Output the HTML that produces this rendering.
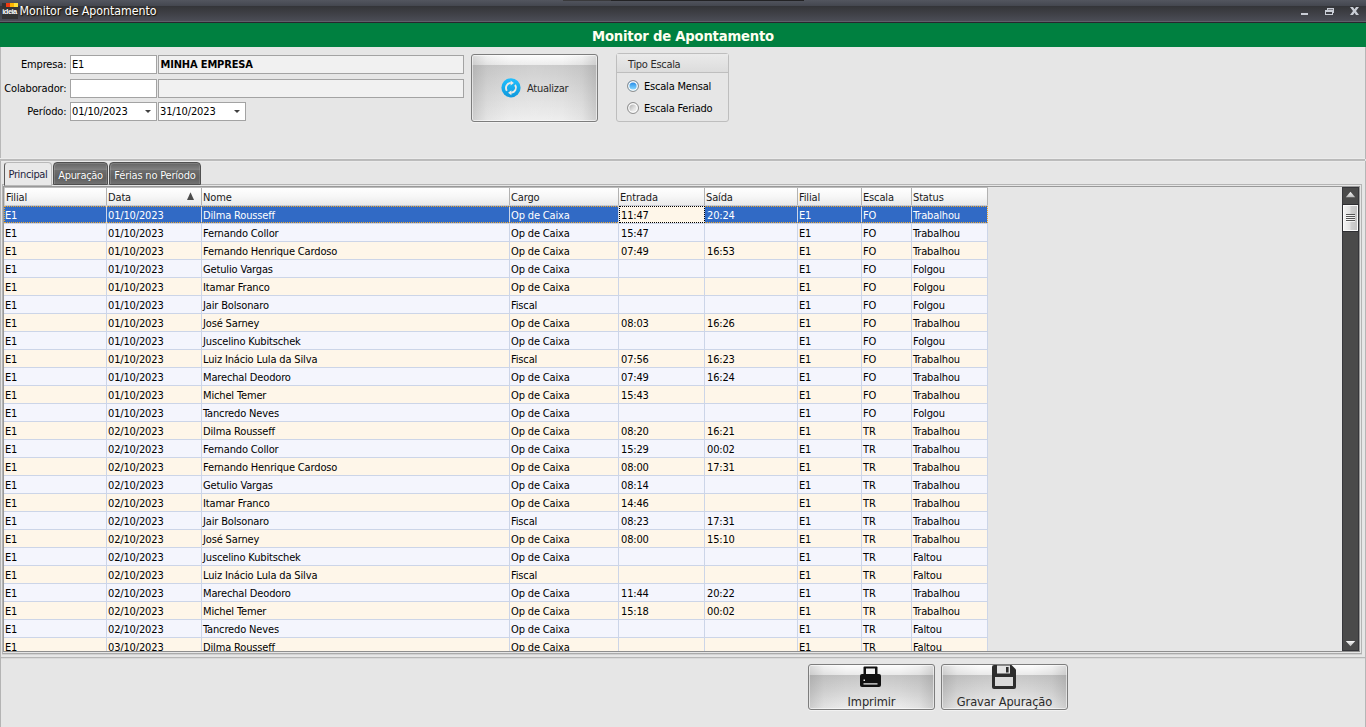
<!DOCTYPE html>
<html lang="pt-BR"><head><meta charset="utf-8"><title>Monitor de Apontamento</title>
<style>
html,body{margin:0;padding:0}
body{width:1366px;height:727px;overflow:hidden;background:#e6e6e6;position:relative;font-family:"DejaVu Sans Condensed","DejaVu Sans","Liberation Sans",sans-serif;font-stretch:condensed;font-size:11px;color:#000;letter-spacing:-0.2px}
*{box-sizing:border-box}
.abs{position:absolute}
/* title bar */
#tb{position:absolute;left:0;top:0;width:1366px;height:23px;background:linear-gradient(#53565f 0,#44474f 6px,#333438 6px,#35363a 7px,#3e3f45 13px,#4b4d56 21px,#5f616b 21px,#5f616b 22px,#29272e 22px,#29272e 23px)}
#tb .strip{position:absolute;left:563px;top:0;width:241px;height:1px;background:linear-gradient(90deg,#3a3a3c 0,#3a3a3c 48px,#232325 48px)}
#tb .ttl{position:absolute;left:19.5px;top:4px;font-size:12.3px;letter-spacing:-0.05px;line-height:15px;color:#fff;text-shadow:1px 1px 1px #1a1206,0 0 2px #2a2010;white-space:nowrap}
#ico{position:absolute;left:2px;top:3px;width:16px;height:16px;background:#333}
#ico b{position:absolute;top:0;height:4px;width:4px}
#ico span{position:absolute;left:-0.5px;top:4px;width:16px;font-family:"Liberation Sans",sans-serif;font-size:7.5px;line-height:9px;color:#fff;letter-spacing:-0.55px;text-align:center;font-weight:bold}
/* green band */
#gb{position:absolute;left:0;top:23px;width:1366px;height:24px;background:#008040;color:#fffff0;font-weight:bold;font-size:14.67px;line-height:24px;letter-spacing:-0.2px;text-align:center}
#gb span{position:absolute;left:592px;top:1px;white-space:nowrap}
/* labels & inputs */
.lbl{position:absolute;width:66.5px;left:0;text-align:right;line-height:13px;white-space:nowrap;letter-spacing:-0.13px}
.inp{position:absolute;height:19px;border:1px solid #a3a3a3;background:#fff;line-height:15px;padding:1px 0 0 1px;white-space:nowrap;letter-spacing:-0.15px;box-shadow:inset 0 0 0 1px #fff, 0 0 0 0 #000}
.inp.ro{background:#f1f1f1;box-shadow:none}
.dd{position:absolute;width:0;height:0;border-left:3px solid transparent;border-right:3px solid transparent;border-top:3px solid #404040}
/* buttons */
.btn{position:absolute;border:1px solid #7d7d7d;border-radius:3px;background:
 linear-gradient(90deg,rgba(90,90,90,.22) 0,rgba(120,120,120,.08) 12%,rgba(255,255,255,0) 30%,rgba(255,255,255,.08) 50%,rgba(255,255,255,0) 72%,rgba(120,120,120,.08) 88%,rgba(90,90,90,.22) 100%),
 linear-gradient(#fdfdfd 0,#ebebeb 10px,#cbcbcb 10px,#d9d9d9 50%,#eeeeee 100%);box-shadow:inset 0 0 0 1px rgba(255,255,255,.55),0 1px 0 #f2f2f2}
.btn.s{background:
 linear-gradient(90deg,rgba(90,90,90,.22) 0,rgba(120,120,120,.08) 12%,rgba(255,255,255,0) 30%,rgba(255,255,255,.08) 50%,rgba(255,255,255,0) 72%,rgba(120,120,120,.08) 88%,rgba(90,90,90,.22) 100%),
 linear-gradient(#fdfdfd 0,#e9e9e9 10px,#c4c4c4 10px,#d6d6d6 60%,#ededed 100%)}
.btn .t{position:absolute;white-space:nowrap;color:#2a2a2a}
/* group */
#grp{position:absolute;left:616px;top:53px;width:113px;height:69px;border:1px solid #bebebe;border-radius:3px}
#grp .h{position:absolute;left:0;top:0;right:0;height:19px;border-bottom:1px solid #bebebe;background:linear-gradient(#eaeaea,#dcdcdc);line-height:22px;padding-left:11px;color:#2b2b2b;letter-spacing:-0.3px}
.radio{position:absolute;width:12px;height:12px;border-radius:50%;border:1px solid #909090;background:linear-gradient(135deg,#b0b0b0 15%,#e4e4e4 60%,#f6f6f6 100%);box-shadow:inset 0 0 0 1.4px #fafafa}
.radio.on{background:linear-gradient(#2a8ae6 15%,#55b4f6 50%,#92dbff 90%)}
/* separators */
.hl{position:absolute;left:0;width:1366px;height:1px}
/* tabs */
.tab{position:absolute;top:162px;height:23px;border:1px solid #505050;border-radius:4px 4px 0 0;color:#fff;line-height:25px;text-align:center;white-space:nowrap;letter-spacing:-0.3px;background:linear-gradient(#646464 0,#828282 7px,#6e6e6e 7px,#606060 15px,#727272 100%);box-shadow:inset 1px 1px 0 rgba(255,255,255,.16),inset -1px 0 0 rgba(255,255,255,.12);text-shadow:0 0 1px #333}
.tab.act{top:162px;height:24px;background:#e9e9e9;border-color:#b9b9b9;border-left-color:#5a5a5a;box-shadow:none;letter-spacing:-0.35px;color:#1e1e3c;text-shadow:none;line-height:23px}
/* grid */
#grid{position:absolute;left:3px;top:186px;width:1357px;height:466px;border:1px solid #999;border-bottom-color:#8e8e8e;background:#e6e6e6;overflow:hidden}
#hdr{position:absolute;left:0;top:0;height:19px;width:984px;background:linear-gradient(#ffffff 0,#f7f7f7 50%,#eaeaea 100%);border-top:1px solid #bdbdbd;border-bottom:1px solid #c6c9d2;box-shadow:inset 1px 0 0 #cdcdcd}
#hdr i{position:absolute;top:0;height:17px;line-height:19px;font-style:normal;padding-left:1px;border-right:1px solid #b2b2b2;white-space:nowrap;color:#1a1a1a;letter-spacing:-0.15px}
#rows{position:absolute;left:0;top:19px;width:984px;letter-spacing:-0.15px}
.r{position:relative;height:18px;width:984px;border-bottom:1px solid #ccd5e8}
.r i{position:absolute;top:0;height:17px;line-height:19px;font-style:normal;padding-left:1px;border-right:1px solid #ccd5e8;white-space:nowrap;overflow:hidden}
.r.a{background:#f4f5fd}
.r.b{background:#fef6e9}
.r.sel{background:#316ac5;color:#fff}
.r.sel:after{content:"";position:absolute;left:0;top:0;width:984px;height:17px;box-sizing:border-box;border:1px dotted #eca52c;pointer-events:none}
.r.sel i.foc{background:#fef6e9;color:#000;outline:1px dotted #000;outline-offset:-1px;z-index:2}
.r i.c4,.r i.c5{padding-left:2px}
#hdr i.c0{padding-left:2px}
.c0{left:0;width:103px}.c1{left:103px;width:95px}.c2{left:198px;width:308px}.c3{left:506px;width:109px}.c4{left:615px;width:86px}.c5{left:701px;width:93px}.c6{left:794px;width:64px}.c7{left:858px;width:50px}.c8{left:908px;width:76px}
/* scrollbar */
#sb{position:absolute;left:1342px;top:187px;width:17px;height:464px;background:#4a4a4a;border:1px solid #36363a}
#thumb{position:absolute;left:1343px;top:205px;width:15px;height:26px;border:1px solid #fafafa;background:linear-gradient(90deg,#f2f2f2 0,#e2e2e2 45%,#cfcfcf 55%,#c4c4c4 100%);box-shadow:0 0 0 1px #2e2e32}
.grip{position:absolute;left:2px;width:9px;height:1px;background:#555;box-shadow:0 1px 0 rgba(255,255,255,.7)}
.tri-up{position:absolute;width:0;height:0;border-left:5px solid transparent;border-right:5px solid transparent;border-bottom:5px solid #dcdcdc}
.tri-dn{position:absolute;width:0;height:0;border-left:5px solid transparent;border-right:5px solid transparent;border-top:5px solid #dcdcdc}
</style></head><body>
<div id="tb"><div class="strip"></div>
<div id="ico"><b style="left:4px;background:#f03a10"></b><b style="left:8px;background:#fcb400"></b><b style="left:12px;background:#fde23a"></b><span>ideia</span></div>
<div class="ttl">Monitor de Apontamento</div>
<svg class="abs" style="left:1298px;top:4px" width="66" height="14" viewBox="0 0 66 14"><rect x="3" y="9" width="7" height="2" fill="#c9cdd5"/><g fill="#c9cdd5" shape-rendering="crispEdges"><rect x="27" y="6" width="8" height="2"/><rect x="27" y="6" width="1" height="5"/><rect x="34" y="6" width="1" height="5"/><rect x="27" y="10" width="8" height="1"/><rect x="29" y="4" width="7" height="1"/><rect x="29" y="4" width="1" height="2"/><rect x="35" y="4" width="1" height="5"/><rect x="30" y="5" width="5" height="1" opacity=".45"/></g><path d="M52 3h3l1.500 2.300L58 3h3l-3 4 3 4h-3l-1.500-2.300L55 11h-3l3-4z" fill="#c9cdd5"/></svg>
</div>
<div id="gb"><span>Monitor de Apontamento</span></div>

<div class="abs" style="left:0;top:47px;width:1px;height:112px;background:#b8b8b8"></div>
<div class="abs" style="left:1365px;top:47px;width:1px;height:112px;background:#b6b6b6"></div>

<div class="lbl" style="top:58px">Empresa:</div>
<div class="lbl" style="top:82px">Colaborador:</div>
<div class="lbl" style="top:105px">Período:</div>
<div class="inp" style="left:70px;top:55px;width:87px">E1</div>
<div class="inp ro" style="left:158px;top:55px;width:306px;font-weight:bold;padding-left:1.5px;letter-spacing:-0.15px">MINHA EMPRESA</div>
<div class="inp" style="left:70px;top:79px;width:87px"></div>
<div class="inp ro" style="left:158px;top:79px;width:306px"></div>
<div class="inp" style="left:70px;top:102px;width:87px">01/10/2023</div>
<div class="inp" style="left:158px;top:102px;width:88px">31/10/2023</div>
<div class="dd" style="left:145px;top:110px"></div>
<div class="dd" style="left:234px;top:110px"></div>

<div class="btn" style="left:471px;top:54px;width:127px;height:68px">
<svg class="abs" style="left:29px;top:23px" width="21" height="21" viewBox="0 0 21 21"><defs><linearGradient id="bg1" x1="0" y1="0" x2="0" y2="1"><stop offset="0" stop-color="#22c0ff"/><stop offset="1" stop-color="#0e98dc"/></linearGradient></defs><circle cx="10" cy="9.800" r="9.600" fill="url(#bg1)"/><g fill="none" stroke="#efe9e4" stroke-width="1.900"><path d="M5.900 12.700A5 5 0 0 1 9.800 4.900"/><path d="M14.100 6.900A5 5 0 0 1 10.200 14.700"/></g><path d="M9.600 2.600L12.900 5.100 9.600 7.600z" fill="#efe9e4"/><path d="M10.400 12.300L7.100 14.800 10.400 17.300z" fill="#efe9e4"/></svg>
<span class="t" style="left:55px;top:27px;line-height:14px;letter-spacing:-0.25px">Atualizar</span></div>

<div id="grp"><div class="h">Tipo Escala</div>
<div class="radio on" style="left:10px;top:26px"></div>
<div class="radio" style="left:10px;top:48px"></div>
<span class="abs" style="left:27px;top:26px;line-height:13px;white-space:nowrap">Escala Mensal</span>
<span class="abs" style="left:27px;top:48px;line-height:13px;white-space:nowrap">Escala Feriado</span>
</div>

<div class="hl" style="top:158px;background:#ececec;width:1365px"></div>
<div class="hl" style="top:159px;background:#bababa;width:1365px"></div>
<div class="hl" style="top:160px;background:#bcbcbc;width:1365px"></div>
<div class="hl" style="top:161px;background:#ebebeb;width:1365px"></div>

<div class="abs" style="left:2px;top:184px;width:1360px;height:470px;border:1px solid #b4b4b4;border-bottom-color:#aaa;box-shadow:0 1px 0 #d2d2d2"></div>
<div class="tab act" style="left:4px;width:48px">Principal</div>
<div class="tab" style="left:53px;width:55px">Apuração</div>
<div class="tab" style="left:109px;width:92px;letter-spacing:-0.2px">Férias no Período</div>

<div id="grid">
<div id="hdr"><i class="c0">Filial</i><i class="c1">Data<svg class="abs" style="left:80px;top:4px" width="8" height="9"><path d="M0 8L3.500 0.300 7 8z" fill="#4c4c4c"/></svg></i><i class="c2">Nome</i><i class="c3">Cargo</i><i class="c4">Entrada</i><i class="c5">Saída</i><i class="c6">Filial</i><i class="c7">Escala</i><i class="c8">Status</i></div>
<div id="rows">
<div class="r sel"><i class="c0">E1</i><i class="c1">01/10/2023</i><i class="c2">Dilma Rousseff</i><i class="c3">Op de Caixa</i><i class="c4 foc">11:47</i><i class="c5">20:24</i><i class="c6">E1</i><i class="c7">FO</i><i class="c8">Trabalhou</i></div>
<div class="r a"><i class="c0">E1</i><i class="c1">01/10/2023</i><i class="c2">Fernando Collor</i><i class="c3">Op de Caixa</i><i class="c4">15:47</i><i class="c5"></i><i class="c6">E1</i><i class="c7">FO</i><i class="c8">Trabalhou</i></div>
<div class="r b"><i class="c0">E1</i><i class="c1">01/10/2023</i><i class="c2">Fernando Henrique Cardoso</i><i class="c3">Op de Caixa</i><i class="c4">07:49</i><i class="c5">16:53</i><i class="c6">E1</i><i class="c7">FO</i><i class="c8">Trabalhou</i></div>
<div class="r a"><i class="c0">E1</i><i class="c1">01/10/2023</i><i class="c2">Getulio Vargas</i><i class="c3">Op de Caixa</i><i class="c4"></i><i class="c5"></i><i class="c6">E1</i><i class="c7">FO</i><i class="c8">Folgou</i></div>
<div class="r b"><i class="c0">E1</i><i class="c1">01/10/2023</i><i class="c2">Itamar Franco</i><i class="c3">Op de Caixa</i><i class="c4"></i><i class="c5"></i><i class="c6">E1</i><i class="c7">FO</i><i class="c8">Folgou</i></div>
<div class="r a"><i class="c0">E1</i><i class="c1">01/10/2023</i><i class="c2">Jair Bolsonaro</i><i class="c3">Fiscal</i><i class="c4"></i><i class="c5"></i><i class="c6">E1</i><i class="c7">FO</i><i class="c8">Folgou</i></div>
<div class="r b"><i class="c0">E1</i><i class="c1">01/10/2023</i><i class="c2">José Sarney</i><i class="c3">Op de Caixa</i><i class="c4">08:03</i><i class="c5">16:26</i><i class="c6">E1</i><i class="c7">FO</i><i class="c8">Trabalhou</i></div>
<div class="r a"><i class="c0">E1</i><i class="c1">01/10/2023</i><i class="c2">Juscelino Kubitschek</i><i class="c3">Op de Caixa</i><i class="c4"></i><i class="c5"></i><i class="c6">E1</i><i class="c7">FO</i><i class="c8">Folgou</i></div>
<div class="r b"><i class="c0">E1</i><i class="c1">01/10/2023</i><i class="c2">Luiz Inácio Lula da Silva</i><i class="c3">Fiscal</i><i class="c4">07:56</i><i class="c5">16:23</i><i class="c6">E1</i><i class="c7">FO</i><i class="c8">Trabalhou</i></div>
<div class="r a"><i class="c0">E1</i><i class="c1">01/10/2023</i><i class="c2">Marechal Deodoro</i><i class="c3">Op de Caixa</i><i class="c4">07:49</i><i class="c5">16:24</i><i class="c6">E1</i><i class="c7">FO</i><i class="c8">Trabalhou</i></div>
<div class="r b"><i class="c0">E1</i><i class="c1">01/10/2023</i><i class="c2">Michel Temer</i><i class="c3">Op de Caixa</i><i class="c4">15:43</i><i class="c5"></i><i class="c6">E1</i><i class="c7">FO</i><i class="c8">Trabalhou</i></div>
<div class="r a"><i class="c0">E1</i><i class="c1">01/10/2023</i><i class="c2">Tancredo Neves</i><i class="c3">Op de Caixa</i><i class="c4"></i><i class="c5"></i><i class="c6">E1</i><i class="c7">FO</i><i class="c8">Folgou</i></div>
<div class="r b"><i class="c0">E1</i><i class="c1">02/10/2023</i><i class="c2">Dilma Rousseff</i><i class="c3">Op de Caixa</i><i class="c4">08:20</i><i class="c5">16:21</i><i class="c6">E1</i><i class="c7">TR</i><i class="c8">Trabalhou</i></div>
<div class="r a"><i class="c0">E1</i><i class="c1">02/10/2023</i><i class="c2">Fernando Collor</i><i class="c3">Op de Caixa</i><i class="c4">15:29</i><i class="c5">00:02</i><i class="c6">E1</i><i class="c7">TR</i><i class="c8">Trabalhou</i></div>
<div class="r b"><i class="c0">E1</i><i class="c1">02/10/2023</i><i class="c2">Fernando Henrique Cardoso</i><i class="c3">Op de Caixa</i><i class="c4">08:00</i><i class="c5">17:31</i><i class="c6">E1</i><i class="c7">TR</i><i class="c8">Trabalhou</i></div>
<div class="r a"><i class="c0">E1</i><i class="c1">02/10/2023</i><i class="c2">Getulio Vargas</i><i class="c3">Op de Caixa</i><i class="c4">08:14</i><i class="c5"></i><i class="c6">E1</i><i class="c7">TR</i><i class="c8">Trabalhou</i></div>
<div class="r b"><i class="c0">E1</i><i class="c1">02/10/2023</i><i class="c2">Itamar Franco</i><i class="c3">Op de Caixa</i><i class="c4">14:46</i><i class="c5"></i><i class="c6">E1</i><i class="c7">TR</i><i class="c8">Trabalhou</i></div>
<div class="r a"><i class="c0">E1</i><i class="c1">02/10/2023</i><i class="c2">Jair Bolsonaro</i><i class="c3">Fiscal</i><i class="c4">08:23</i><i class="c5">17:31</i><i class="c6">E1</i><i class="c7">TR</i><i class="c8">Trabalhou</i></div>
<div class="r b"><i class="c0">E1</i><i class="c1">02/10/2023</i><i class="c2">José Sarney</i><i class="c3">Op de Caixa</i><i class="c4">08:00</i><i class="c5">15:10</i><i class="c6">E1</i><i class="c7">TR</i><i class="c8">Trabalhou</i></div>
<div class="r a"><i class="c0">E1</i><i class="c1">02/10/2023</i><i class="c2">Juscelino Kubitschek</i><i class="c3">Op de Caixa</i><i class="c4"></i><i class="c5"></i><i class="c6">E1</i><i class="c7">TR</i><i class="c8">Faltou</i></div>
<div class="r b"><i class="c0">E1</i><i class="c1">02/10/2023</i><i class="c2">Luiz Inácio Lula da Silva</i><i class="c3">Fiscal</i><i class="c4"></i><i class="c5"></i><i class="c6">E1</i><i class="c7">TR</i><i class="c8">Faltou</i></div>
<div class="r a"><i class="c0">E1</i><i class="c1">02/10/2023</i><i class="c2">Marechal Deodoro</i><i class="c3">Op de Caixa</i><i class="c4">11:44</i><i class="c5">20:22</i><i class="c6">E1</i><i class="c7">TR</i><i class="c8">Trabalhou</i></div>
<div class="r b"><i class="c0">E1</i><i class="c1">02/10/2023</i><i class="c2">Michel Temer</i><i class="c3">Op de Caixa</i><i class="c4">15:18</i><i class="c5">00:02</i><i class="c6">E1</i><i class="c7">TR</i><i class="c8">Trabalhou</i></div>
<div class="r a"><i class="c0">E1</i><i class="c1">02/10/2023</i><i class="c2">Tancredo Neves</i><i class="c3">Op de Caixa</i><i class="c4"></i><i class="c5"></i><i class="c6">E1</i><i class="c7">TR</i><i class="c8">Faltou</i></div>
<div class="r b"><i class="c0">E1</i><i class="c1">03/10/2023</i><i class="c2">Dilma Rousseff</i><i class="c3">Op de Caixa</i><i class="c4"></i><i class="c5"></i><i class="c6">E1</i><i class="c7">TR</i><i class="c8">Faltou</i></div>
</div>
</div>
<div id="sb"></div>
<svg class="abs" style="left:1343px;top:187px" width="16" height="18"><defs><linearGradient id="ag" x1="0" y1="0" x2="0" y2="1"><stop offset="0" stop-color="#fafafa"/><stop offset="1" stop-color="#b9b9b9"/></linearGradient></defs><path d="M2.800 10.200L7.500 4.800 12.200 10.200z" fill="url(#ag)"/></svg>
<div id="thumb"><div class="grip" style="top:8px"></div><div class="grip" style="top:10px"></div><div class="grip" style="top:12px"></div><div class="grip" style="top:14px"></div></div>
<svg class="abs" style="left:1343px;top:636px" width="16" height="15"><path d="M2.800 5L12.200 5 7.500 10.300z" fill="url(#ag)"/></svg>

<div class="hl" style="top:657px;background:#b6b6b6;width:1365px"></div>
<div class="hl" style="top:658px;background:#dadada;width:1365px"></div>
<div class="abs" style="left:0;top:161px;width:1px;height:566px;background:#b4b4b4"></div>
<div class="abs" style="left:1365px;top:161px;width:1px;height:566px;background:#b6b6b6"></div>

<div class="btn s" style="left:808px;top:664px;width:127px;height:46px">
<svg class="abs" style="left:51px;top:1px" width="21" height="21" viewBox="0 0 21 21"><path d="M4.500 0.500h12a1 1 0 0 1 1 1V8h-14V1.500a1 1 0 0 1 1-1z" fill="#111"/><rect x="6" y="2.500" width="9" height="6" fill="#f2f2f2"/><path d="M2 8h17a2 2 0 0 1 2 2v9a2 2 0 0 1-2 2H2a2 2 0 0 1-2-2v-9a2 2 0 0 1 2-2z" fill="#111"/><rect x="3.500" y="17.300" width="14" height="1.200" fill="#f2f2f2"/><rect x="3.500" y="13.500" width="1.500" height="1.500" fill="#f2f2f2"/></svg>
<span class="t" style="left:0;width:125px;text-align:center;top:29px;font-size:12.7px;letter-spacing:-0.1px;line-height:16px">Imprimir</span></div>
<div class="btn s" style="left:941px;top:664px;width:127px;height:46px">
<svg class="abs" style="left:50px;top:-1px" width="25" height="26" viewBox="0 0 25 26"><path d="M2 1h17.500L24 5.500V23a2 2 0 0 1-2 2H2a2 2 0 0 1-2-2V3a2 2 0 0 1 2-2z" fill="#2d2d2d"/><rect x="5" y="1.500" width="13" height="8" fill="#e4e4e4"/><rect x="14" y="3" width="2.600" height="5.500" fill="#2d2d2d"/><rect x="3" y="13" width="18" height="9" fill="#dadada"/></svg>
<span class="t" style="left:0;width:125px;text-align:center;top:29px;font-size:12.7px;letter-spacing:-0.1px;line-height:16px">Gravar Apuração</span></div>
</body></html>
